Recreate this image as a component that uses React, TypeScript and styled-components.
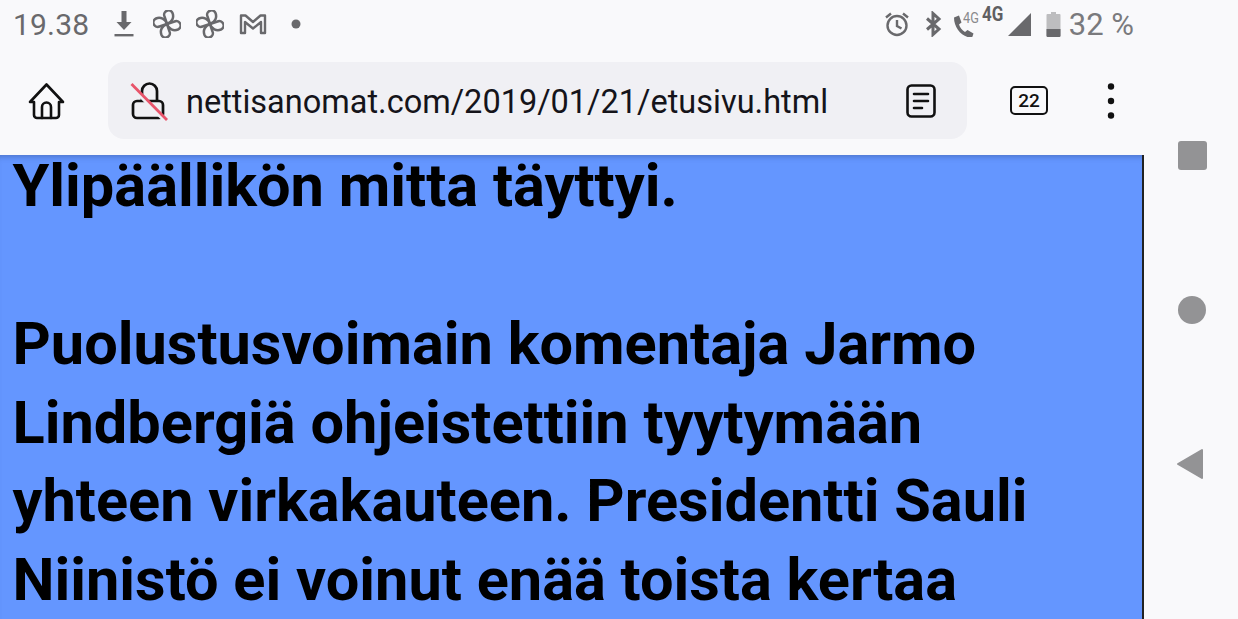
import { FC } from 'react'
import styled, { createGlobalStyle } from 'styled-components'

const GlobalStyle = createGlobalStyle`
  html, body {
    margin: 0;
    padding: 0;
    overflow: hidden;
    background: #f9f9fb;
  }
`

const Screen = styled.div`
  width: 1238px;
  height: 619px;
  display: flex;
  overflow: hidden;
  font-family: Roboto, "Liberation Sans", sans-serif;
  background: #f9f9fb;
`

const MainColumn = styled.div`
  width: 1144px;
  flex: none;
  display: flex;
  flex-direction: column;
`

const StatusBar = styled.div`
  height: 48px;
  flex: none;
  display: flex;
  align-items: center;
  justify-content: space-between;
  padding: 0 10px 0 13px;
  color: #69696c;
`

const StatusGroup = styled.div`
  display: flex;
  align-items: center;
`

const Clock = styled.span`
  font-size: 30px;
  letter-spacing: 0.2px;
  margin-right: 25px;
`

const StatusIcon = styled.svg<{ $gap?: number }>`
  display: block;
  flex: none;
  margin-right: ${p => p.$gap ?? 0}px;
`

const Battery = styled.span`
  font-size: 31px;
  margin-left: 8px;
  color: #7a7a7d;
`

const NetworkLabel = styled.span<{ $width: number; $size: number; $lift: number; $left?: number; $bold?: boolean }>`
  width: ${p => p.$width}px;
  font-size: ${p => p.$size}px;
  line-height: 1;
  font-weight: ${p => (p.$bold ? 700 : 400)};
  margin-top: ${p => -p.$lift}px;
  margin-left: ${p => p.$left ?? 0}px;
  white-space: nowrap;
  color: ${p => (p.$bold ? '#5f5f62' : '#8a8a8d')};
  transform: scaleX(0.85);
  transform-origin: left center;
  display: inline-block;
`

const Toolbar = styled.div`
  height: 107px;
  flex: none;
  display: flex;
  align-items: flex-start;
  padding: 14px 0 0 26px;
  box-sizing: border-box;
  color: #111;
`

const UrlBar = styled.div`
  width: 859px;
  height: 77px;
  margin-left: 41px;
  border-radius: 16px;
  background: #f0f0f4;
  display: flex;
  align-items: center;
  padding-left: 22px;
  box-sizing: border-box;
`

const UrlText = styled.span`
  flex: 1;
  font-size: 32.5px;
  color: #15141a;
  margin-left: 18px;
  padding-top: 3px;
  white-space: nowrap;
`

const ToolbarSlot = styled.div<{ $width: number }>`
  width: ${p => p.$width}px;
  height: 77px;
  flex: none;
  display: flex;
  align-items: center;
  justify-content: center;
`

const ReaderSlot = styled(ToolbarSlot)`
  margin-right: 31px;
`

const TabCounter = styled.div`
  width: 38px;
  height: 29px;
  border: 2.5px solid #111;
  border-radius: 5px;
  box-sizing: border-box;
  display: flex;
  align-items: center;
  justify-content: center;
  font-size: 19px;
  font-weight: 500;
`

const Page = styled.main`
  flex: 1;
  background: #6496ff;
  border-right: 2px solid #222;
  box-shadow: inset 0 6px 6px -5px rgba(40, 60, 110, 0.45);
  padding: 0 14px 0 12.5px;
  color: #000;
`

const Paragraph = styled.p`
  margin: 0;
  font-size: 59.5px;
  font-weight: 700;
  line-height: 78.5px;
  white-space: nowrap;
`

const FirstParagraph = styled(Paragraph)`
  line-height: 62.5px;
  margin-bottom: 87.5px;
`

const NavRail = styled.nav`
  flex: 1;
  display: flex;
  flex-direction: column;
  align-items: center;
  padding: 126px 0 0 2px;
  box-sizing: border-box;
  gap: 96.5px;
`

const NavSlot = styled.div`
  width: 32px;
  height: 58px;
  display: flex;
  align-items: center;
  justify-content: center;
`

const NavSquare = styled.div`
  width: 29px;
  height: 29px;
  border-radius: 3px;
  background: #939395;
`

const NavCircle = styled.div`
  width: 28px;
  height: 28px;
  border-radius: 50%;
  background: #939395;
`

const Pinwheel: FC<{ gap: number }> = ({ gap }) => (
  <StatusIcon $gap={gap} width="28" height="28" viewBox="0 0 28 28" fill="none" stroke="#69696c" strokeWidth="2.500" strokeLinejoin="round">
    {[0, 90, 180, 270].map(angle => (
      <path key={angle} transform={`rotate(${angle} 14 14)`} d="M14 14 11.500 6.500a4.300 4.300 0 0 1 8-3.500c1.800 4.500-.5 9.500-5.500 11z" />
    ))}
  </StatusIcon>
)

export default function App() {
  return (
    <Screen>
      <GlobalStyle />
      <MainColumn>
        <StatusBar>
          <StatusGroup>
            <Clock>19.38</Clock>
            <StatusIcon $gap={19} width="20" height="28" viewBox="0 0 20 28" fill="#69696c">
              <path d="M7.500 1h5v11h5l-7.500 8-7.500-8h5z" />
              <rect x="0.500" y="24" width="19" height="2.400" />
            </StatusIcon>
            <Pinwheel gap={15} />
            <Pinwheel gap={15} />
            <StatusIcon $gap={24} width="28" height="24" viewBox="0 0 28 24" fill="none" stroke="#69696c" strokeWidth="2.400" strokeLinejoin="round">
              <path d="M2 3.500h4.500L14 10l7.500-6.500H26V21h-4V10l-8 6.500L6 10v11H2z" />
            </StatusIcon>
            <StatusIcon width="10" height="10" viewBox="0 0 10 10" fill="#69696c">
              <circle cx="5" cy="5" r="4.500" />
            </StatusIcon>
          </StatusGroup>
          <StatusGroup>
            <StatusIcon $gap={14} width="26" height="26" viewBox="0 0 26 26" fill="none" stroke="#69696c" strokeWidth="2.400">
              <circle cx="13" cy="14.500" r="9.500" />
              <path d="M13 9v6l4.500 2.500M2 6.500 7 2.500M24 6.500l-5-4" />
            </StatusIcon>
            <StatusIcon $gap={11} width="18" height="26" viewBox="0 0 18 26" fill="none" stroke="#69696c" strokeWidth="3">
              <path d="M3 7.500 15 18l-6 5.500V2.500L15 8 3 18.500" />
            </StatusIcon>
            <StatusIcon width="21" height="26" viewBox="0 0 21 26" fill="#69696c">
              <path d="M1 6.500 6 4.500l2.500 7L6 13.500c1 3 3 5.500 6 7.500l2.500-2 6 3.500-1 3c-.5 1-1.500 1.200-3 1C8 25 1 16.500 1 6.500z" />
            </StatusIcon>
            <NetworkLabel $width={19} $left={-11} $size={15} $lift={11}>4G</NetworkLabel>
            <NetworkLabel $width={26} $size={20} $lift={20} $bold>4G</NetworkLabel>
            <StatusIcon $gap={15} width="23" height="23" viewBox="0 0 23 23" fill="#69696c">
              <path d="M23 0v23H0z" />
            </StatusIcon>
            <StatusIcon width="15" height="26" viewBox="0 0 15 26">
              <path d="M5 1h5v2h3.500a1 1 0 0 1 1 1v21H.5V4a1 1 0 0 1 1-1H5z" fill="#bdbdbf" />
              <path d="M.5 18h14v7a1 1 0 0 1-1 1h-12a1 1 0 0 1-1-1z" fill="#69696c" />
            </StatusIcon>
            <Battery>32 %</Battery>
          </StatusGroup>
        </StatusBar>
        <Toolbar>
          <ToolbarSlot $width={41}>
            <svg width="37" height="38" viewBox="0 0 37 38" fill="none" stroke="#111" strokeWidth="2.600" strokeLinejoin="round" strokeLinecap="round">
              <path d="M2 20 18.500 2.500 35 20h-4v13a3 3 0 0 1-3 3H9a3 3 0 0 1-3-3V20z" />
              <path d="M14 36V25a4.500 4.500 0 0 1 9 0v11" />
            </svg>
          </ToolbarSlot>
          <UrlBar>
            <svg width="38" height="40" viewBox="0 0 38 40" fill="none" strokeLinejoin="round">
              <rect x="3" y="20" width="30" height="17" rx="4" stroke="#111" strokeWidth="2.700" />
              <path d="M12 20V10a7.500 7.500 0 0 1 15 0v10" stroke="#111" strokeWidth="2.700" />
              <path d="M-1 3.500 34 39" stroke="#f0f0f4" strokeWidth="3.500" />
              <path d="M1.500 3 37 39" stroke="#e8546a" strokeWidth="2.800" />
            </svg>
            <UrlText>nettisanomat.com/2019/01/21/etusivu.html</UrlText>
            <ReaderSlot $width={30}>
              <svg width="30" height="34" viewBox="0 0 30 34" fill="none" stroke="#111" strokeWidth="2.600" strokeLinecap="round">
                <rect x="1.500" y="1.500" width="27" height="31" rx="4" />
                <path d="M8 10h14M8 17h14M8 24h8" />
              </svg>
            </ReaderSlot>
          </UrlBar>
          <ToolbarSlot $width={124}>
            <TabCounter>22</TabCounter>
          </ToolbarSlot>
          <ToolbarSlot $width={40}>
            <svg width="8" height="38" viewBox="0 0 8 38" fill="#111">
              <circle cx="4" cy="4.500" r="3.200" />
              <circle cx="4" cy="19" r="3.200" />
              <circle cx="4" cy="33.500" r="3.200" />
            </svg>
          </ToolbarSlot>
        </Toolbar>
        <Page>
          <FirstParagraph>Ylipäällikön mitta täyttyi.</FirstParagraph>
          <Paragraph>
            Puolustusvoimain komentaja Jarmo<br />
            Lindbergiä ohjeistettiin tyytymään<br />
            yhteen virkakauteen. Presidentti Sauli<br />
            Niinistö ei voinut enää toista kertaa
          </Paragraph>
        </Page>
      </MainColumn>
      <NavRail>
        <NavSlot><NavSquare /></NavSlot>
        <NavSlot><NavCircle /></NavSlot>
        <NavSlot>
          <svg width="32" height="32" viewBox="0 0 32 32" fill="#939395" stroke="#939395" strokeWidth="2" strokeLinejoin="round">
            <path d="M26 2v28L2 16z" />
          </svg>
        </NavSlot>
      </NavRail>
    </Screen>
  )
}
